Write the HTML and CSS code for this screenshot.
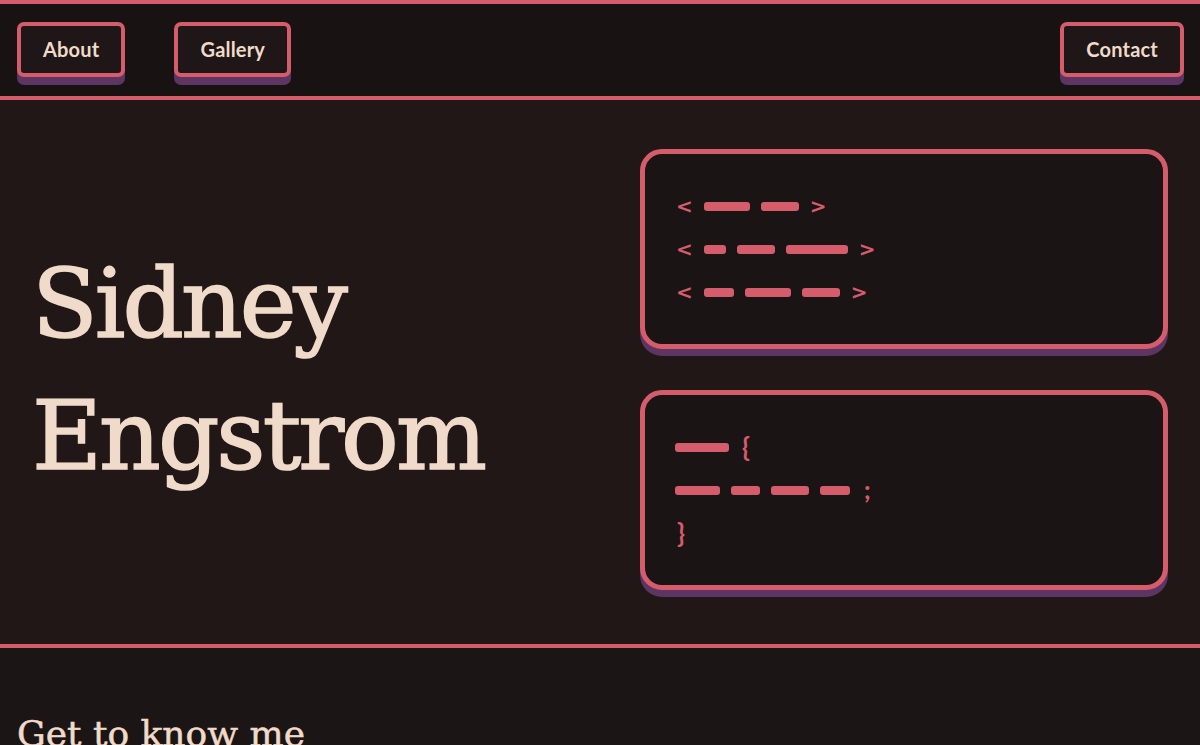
FILE: index.html
```html
<!DOCTYPE html>
<html lang="en">
<head>
<meta charset="utf-8">
<title>Sidney Engstrom</title>
<link rel="stylesheet" href="styles.css">
</head>
<body>
<header class="site-header">
  <nav class="nav">
    <div class="nav-left">
      <a class="btn" href="#about">About</a>
      <a class="btn" href="#gallery">Gallery</a>
    </div>
    <a class="btn" href="#contact">Contact</a>
  </nav>
</header>
<main>
  <section class="hero">
    <h1 class="title">Sidney<br>Engstrom</h1>
    <div class="cards">
      <div class="card">
        <div class="row"><span class="sym chev">&lt;</span><span class="bar" style="width:46px"></span><span class="bar" style="width:38px"></span><span class="sym chev">&gt;</span></div>
        <div class="row"><span class="sym chev">&lt;</span><span class="bar" style="width:22px"></span><span class="bar" style="width:38px"></span><span class="bar" style="width:62px"></span><span class="sym chev">&gt;</span></div>
        <div class="row"><span class="sym chev">&lt;</span><span class="bar" style="width:30px"></span><span class="bar" style="width:46px"></span><span class="bar" style="width:38px"></span><span class="sym chev">&gt;</span></div>
      </div>
      <div class="card card-code">
        <div class="row"><span class="bar" style="width:54px"></span><span class="sym brace">{</span></div>
        <div class="row"><span class="bar" style="width:45px"></span><span class="bar" style="width:29px"></span><span class="bar" style="width:38px"></span><span class="bar" style="width:30px"></span><span class="sym semi">;</span></div>
        <div class="row"><span class="sym brace">}</span></div>
      </div>
    </div>
  </section>
  <section class="about" id="about">
    <h2 class="section-title">Get to know me</h2>
  </section>
</main>
</body>
</html>
```
FILE: styles.css
```css
* { box-sizing: border-box; }
html, body { margin: 0; padding: 0; }
body {
  background: #1b1515;
  color: #f0dac9;
  font-family: "Lato", "Open Sans", sans-serif;
}
.site-header {
  background: #181213;
  border-top: 4px solid #d55c6b;
  border-bottom: 4px solid #d55c6b;
}
.nav {
  display: flex;
  justify-content: space-between;
  align-items: flex-start;
  padding: 18px 16px 19px 17px;
}
.nav-left { display: flex; gap: 49px; }
.btn {
  display: block;
  height: 55px;
  line-height: 47px;
  padding: 0 22px;
  border: 4px solid #d55c6b;
  border-radius: 7px;
  background: #1e1617;
  box-shadow: 0 8px 0 #5c3562;
  color: #f0dac9;
  font-family: "Lato", sans-serif;
  font-weight: 700;
  font-size: 20px;
  text-decoration: none;
  letter-spacing: 0.2px;
}
.hero {
  display: grid;
  grid-template-columns: 1fr 528px;
  align-items: center;
  padding: 49px 32px 54px 32px;
  background: #201716;
  border-bottom: 4px solid #d55c6b;
}
.title {
  margin: 0;
  font-family: "DejaVu Serif", serif;
  font-weight: 400;
  font-size: 96px;
  line-height: 132px;
  letter-spacing: -3px;
  color: #f0dac9;
  -webkit-text-stroke: 1.6px #f0dac9;
}
.cards { display: flex; flex-direction: column; gap: 41px; }
.card {
  height: 200px;
  border: 5px solid #d55c6b;
  border-radius: 22px;
  background: #1a1414;
  box-shadow: 0 7px 0 #5c3562;
  padding: 0 30px 0 31px;
  display: flex;
  flex-direction: column;
  justify-content: center;
}
.card-code { padding-left: 30px; }
.row {
  height: 43px;
  display: flex;
  align-items: center;
  gap: 11px;
}
.bar {
  display: block;
  height: 9px;
  border-radius: 3px;
  background: #d55c6b;
}
.sym {
  color: #d55c6b;
  font-weight: 700;
  line-height: 1;
}
.chev {
  font-family: "DejaVu Sans", sans-serif;
  font-size: 20px;
  line-height: 20px;
}
.brace {
  font-family: "Lato", sans-serif;
  font-weight: 700;
  font-size: 26px;
  margin-left: 2px;
}
.semi {
  font-family: "Lato", sans-serif;
  font-weight: 900;
  font-size: 24px;
  margin-left: 3px;
}
.about {
  background: #1b1515;
  padding: 64px 17px 40px;
}
.section-title {
  margin: 0;
  font-family: "DejaVu Serif", serif;
  font-weight: 400;
  font-size: 36px;
  line-height: 1.2;
  color: #f0dac9;
  -webkit-text-stroke: 0.5px #f0dac9;
}
```
